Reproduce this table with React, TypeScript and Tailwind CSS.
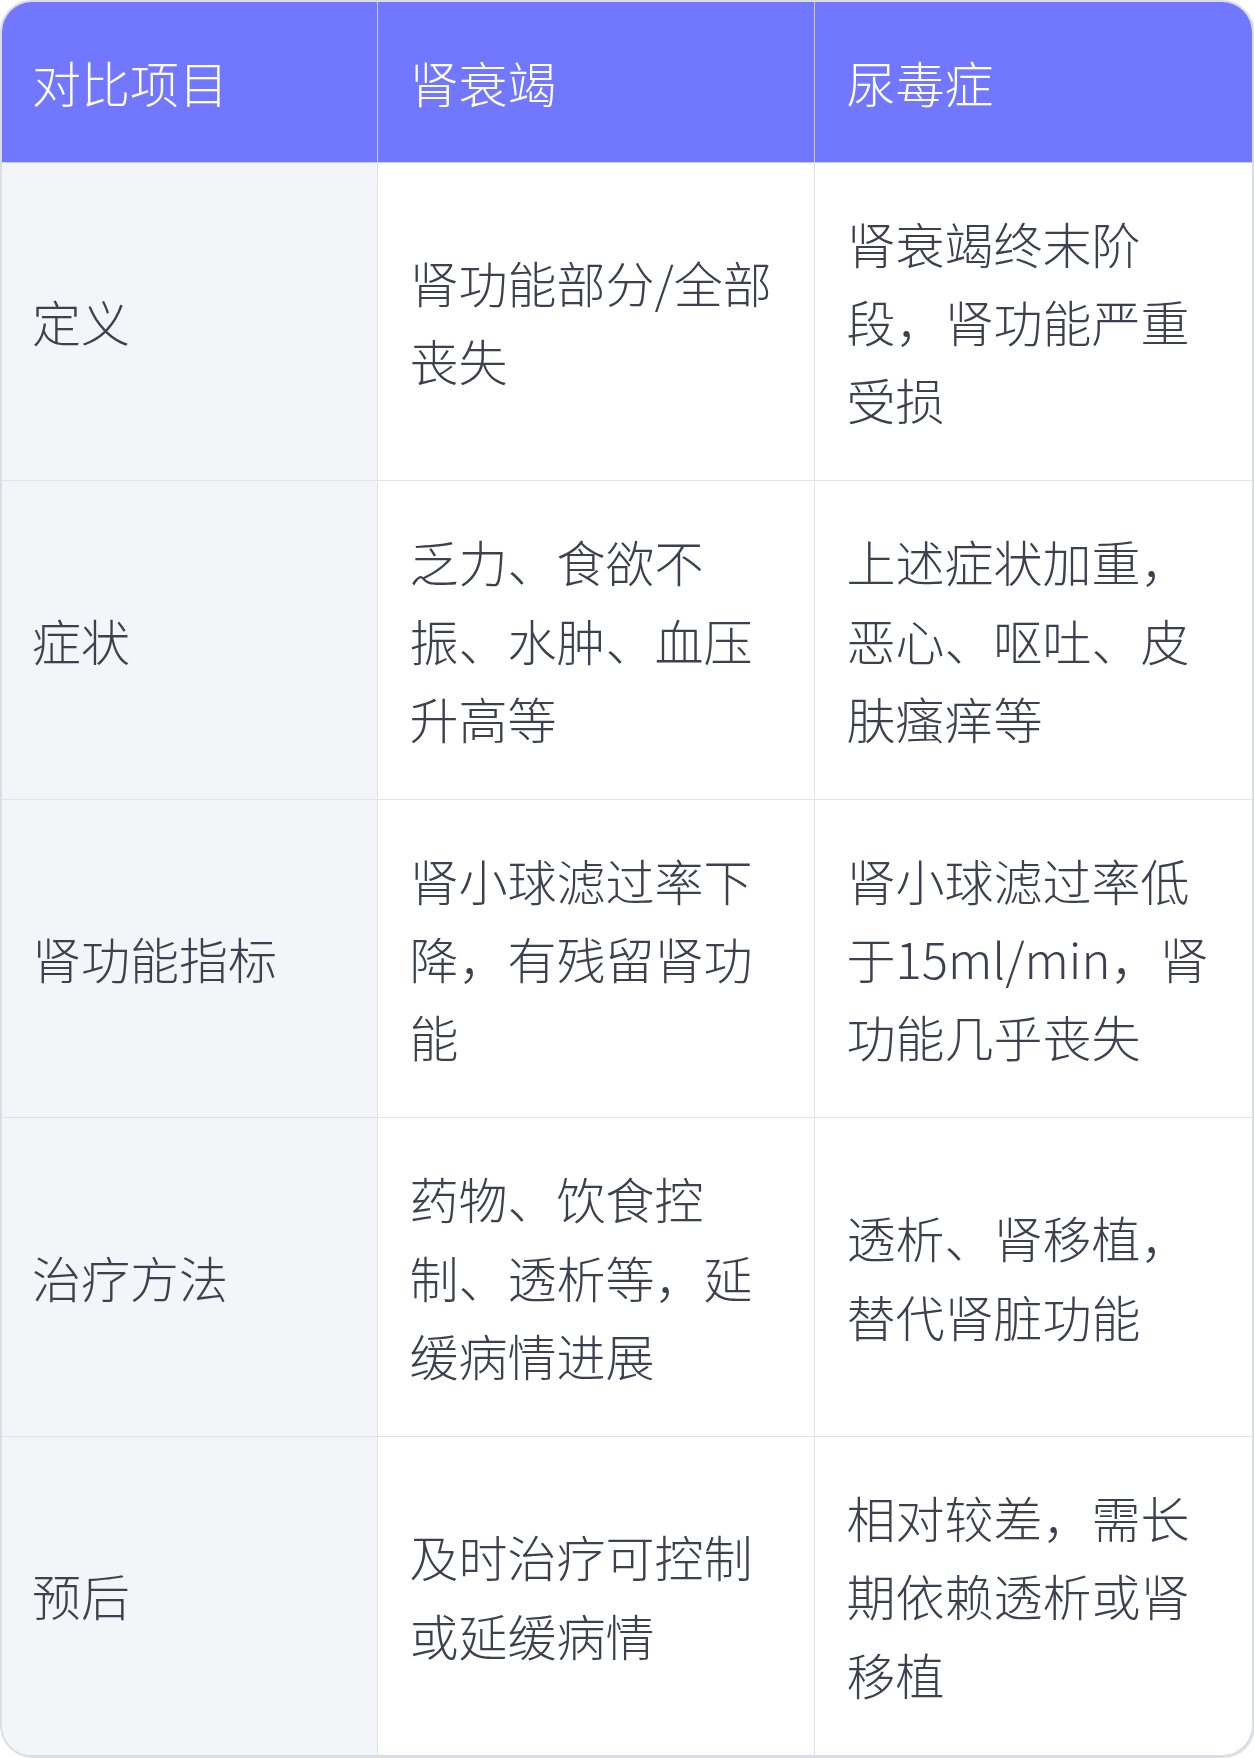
import React from "react";

const rows: [string, string, string][] = [
  ["定义", "肾功能部分/全部丧失", "肾衰竭终末阶段，肾功能严重受损"],
  ["症状", "乏力、食欲不振、水肿、血压升高等", "上述症状加重，恶心、呕吐、皮肤瘙痒等"],
  ["肾功能指标", "肾小球滤过率下降，有残留肾功能", "肾小球滤过率低于15ml/min，肾功能几乎丧失"],
  ["治疗方法", "药物、饮食控制、透析等，延缓病情进展", "透析、肾移植，替代肾脏功能"],
  ["预后", "及时治疗可控制或延缓病情", "相对较差，需长期依赖透析或肾移植"],
];

export default function App() {
  return (
    <div
      className="w-[1254px] h-[1758px] bg-white"
      style={{
        fontFamily:
          '"Noto Sans CJK SC Light", "Noto Sans CJK SC DemiLight", "Noto Sans CJK SC", "Noto Sans", sans-serif',
      }}
    >
      <div className="w-[1254px] rounded-[32px] border-2 border-[#dcdde2] overflow-hidden shadow-[1px_1px_0_#dcdde2]">
        <table className="w-full border-collapse table-fixed text-[49px] leading-[78.4px] font-light">
          <colgroup>
            <col className="w-[375px]" />
            <col className="w-[437px]" />
            <col />
          </colgroup>
          <thead>
            <tr className="bg-[#7177ff] text-white h-[160px]">
              <th className="text-left font-light px-[30px] border-b border-[#c9cbf2]">对比项目</th>
              <th className="text-left font-light px-[32px] border-l border-b border-[#c9cbf2]">肾衰竭</th>
              <th className="text-left font-light px-[32px] border-l border-b border-[#c9cbf2]">尿毒症</th>
            </tr>
          </thead>
          <tbody className="text-[#3d414f]">
            {rows.map((r, i) => (
              <tr key={i} className="h-[318.5px]">
                <td className={`bg-[#f4f5f9] px-[30px] align-middle ${i > 0 ? "border-t" : ""} border-[#e1e2e7]`}>
                  {r[0]}
                </td>
                <td className={`px-[32px] align-middle border-l border-[#e1e2e7] ${i > 0 ? "border-t" : ""}`}>
                  {r[1]}
                </td>
                <td className={`px-[32px] align-middle border-l border-[#e1e2e7] ${i > 0 ? "border-t" : ""}`}>
                  {r[2]}
                </td>
              </tr>
            ))}
          </tbody>
        </table>
      </div>
    </div>
  );
}
